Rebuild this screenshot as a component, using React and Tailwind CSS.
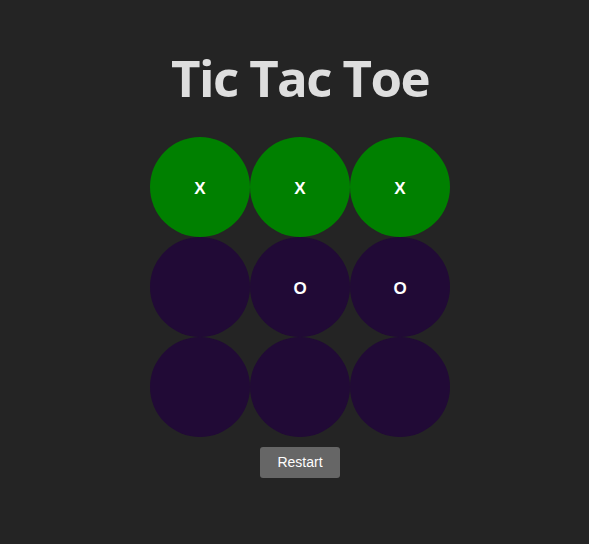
import { useState } from "react";

const START = ["X", "X", "X", "", "O", "O", "", "", ""];
const WIN = [0, 1, 2];

export default function App() {
  const [board, setBoard] = useState(START);

  return (
    <div className="min-h-[544px] w-full overflow-hidden bg-[#242424] font-['Open_Sans',sans-serif] text-[#dedede]">
      <div className="w-[600px] flex flex-col items-center pt-[49px]">
        <h1 className="text-[51px] font-bold leading-[1.1] tracking-[-1.6px]">Tic Tac Toe</h1>
        <div className="mt-[32px] grid grid-cols-[repeat(3,100px)]">
          {board.map((cell, i) => (
            <div
              key={i}
              className={`w-[100px] h-[100px] rounded-full flex items-center justify-center pt-[3px] text-white text-[17px] font-bold font-['Liberation_Sans',sans-serif] ${
                WIN.includes(i) ? "bg-[#008000]" : "bg-[#210a36]"
              }`}
            >
              {cell}
            </div>
          ))}
        </div>
        <button
          onClick={() => setBoard(Array(9).fill(""))}
          className="mt-[10px] w-[80px] h-[31px] rounded-[3px] bg-[#666666] text-white text-[14px] font-['Liberation_Sans',sans-serif]"
        >
          Restart
        </button>
      </div>
    </div>
  );
}
